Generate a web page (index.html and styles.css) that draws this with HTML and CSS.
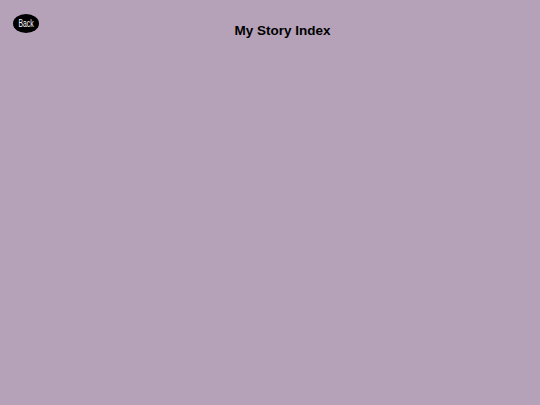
FILE: index.html
```html
<!DOCTYPE html>
<html>
<head>
<meta charset="utf-8">
<link rel="stylesheet" href="styles.css">
</head>
<body>
<header class="header">
  <button class="back"><span class="back-label">Back</span></button>
  <h1 class="title">My Story Index</h1>
</header>
</body>
</html>
```
FILE: styles.css
```css
html, body {
  margin: 0;
  padding: 0;
  height: 100%;
}
body {
  background: #b5a2b8;
  font-family: "Liberation Sans", Arial, sans-serif;
}
.header {
  display: flex;
  align-items: flex-start;
  padding: 14px 14px 0 13px;
}
.back {
  width: 26px;
  height: 19px;
  border: none;
  border-radius: 50%;
  background: #000;
  color: #fff;
  padding: 0;
  display: flex;
  align-items: center;
  justify-content: center;
}
.back-label {
  display: inline-block;
  font-family: "Liberation Sans", Arial, sans-serif;
  font-size: 10px;
  line-height: 10px;
  transform: scaleX(0.68);
  margin-top: 1px;
}
.title {
  flex: 1;
  margin: 9px 0 0 0;
  font-size: 13.5px;
  font-weight: bold;
  line-height: 16px;
  text-align: center;
  color: #000;
}
```
